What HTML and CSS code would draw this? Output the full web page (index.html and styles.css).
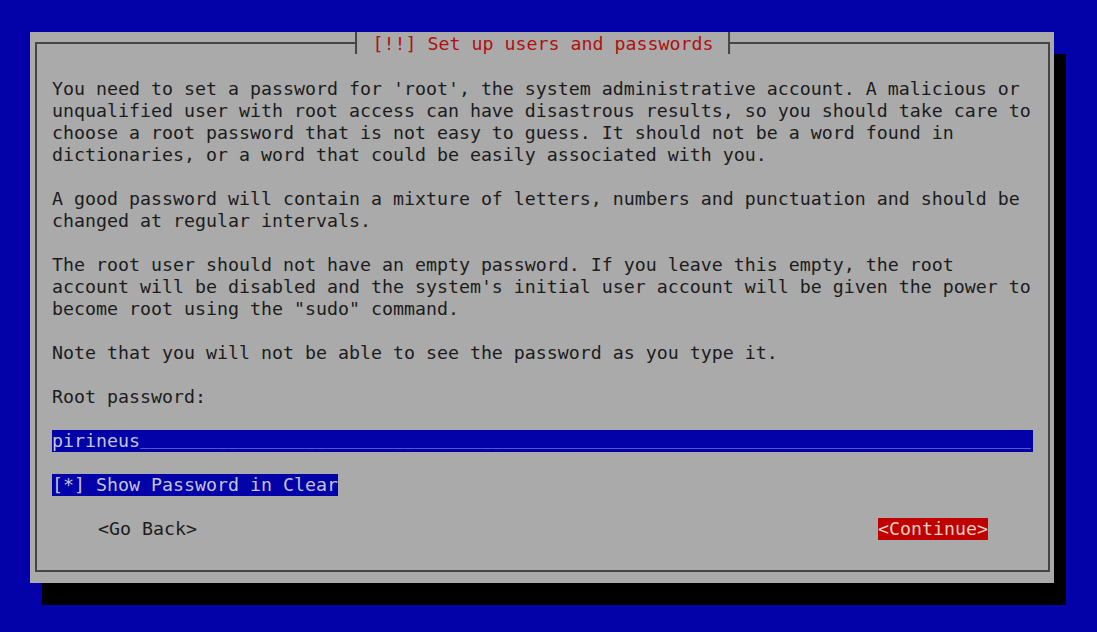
FILE: index.html
```html
<!DOCTYPE html>
<html lang="en">
<head>
    <meta charset="UTF-8">
    <meta name="viewport" content="width=device-width, initial-scale=1.0">
    <title>Set up users and passwords</title>
    <link rel="stylesheet" href="styles.css">
</head>
<body>

<div class="dialog">
    <div class="frame">
        <div class="title">[!!] Set up users and passwords</div>

        <p>You need to set a password for 'root', the system administrative account. A malicious or<br>unqualified user with root access can have disastrous results, so you should take care to<br>choose a root password that is not easy to guess. It should not be a word found in<br>dictionaries, or a word that could be easily associated with you.</p>

        <p>A good password will contain a mixture of letters, numbers and punctuation and should be<br>changed at regular intervals.</p>

        <p>The root user should not have an empty password. If you leave this empty, the root<br>account will be disabled and the system's initial user account will be given the power to<br>become root using the "sudo" command.</p>

        <p>Note that you will not be able to see the password as you type it.</p>

        <p>Root password:</p>

        <div class="entry">pirineus<span class="fill">_________________________________________________________________________________</span></div>

        <div class="check-row"><span class="check">[*] Show Password in Clear</span></div>

        <div class="buttons">
            <span class="button">&lt;Go Back&gt;</span>
            <span class="button active">&lt;Continue&gt;</span>
        </div>
    </div>
</div>

</body>
</html>
```

FILE: styles.css
```css
body {
    margin: 0;
    padding: 32px 0 0 30px;
    background-color: #0202a8;
    font-family: "DejaVu Sans Mono", "Liberation Mono", monospace;
    font-size: 18.27px;
    line-height: 22px;
    color: #1c1c1c;
    height: 100vh;
    box-sizing: border-box;
    overflow: hidden;
}

.dialog {
    width: 1024px;
    height: 551px;
    box-sizing: border-box;
    padding: 10px 4px 11px 5px;
    background-color: #aaaaaa;
    box-shadow: 12px 22px 0 #000;
}

.frame {
    position: relative;
    height: 100%;
    box-sizing: border-box;
    border: 2px solid #454545;
    padding: 34px 0 0 15px;
}

.title {
    position: absolute;
    top: -12px;
    left: 50%;
    transform: translateX(-50%);
    height: 22px;
    box-sizing: border-box;
    padding: 2px 15px 0 16px;
    line-height: 20px;
    border-left: 2px solid #454545;
    border-right: 2px solid #454545;
    background-color: #aaaaaa;
    color: #b01010;
    white-space: pre;
}

p {
    margin: 0 0 22px 0;
    white-space: nowrap;
}

.entry {
    width: 981px;
    height: 22px;
    background-color: #0202a8;
    color: #c4c4d6;
    white-space: pre;
    margin-bottom: 22px;
}

.fill {
    position: relative;
    top: -2px;
    color: #9c9ce0;
}

.check-row {
    height: 22px;
    margin-bottom: 22px;
}

.check {
    display: inline-block;
    background-color: #0202a8;
    color: #c4c4d6;
    white-space: pre;
}

.buttons {
    width: 981px;
    box-sizing: border-box;
    display: flex;
    justify-content: space-between;
    padding: 0 45px 0 46px;
}

.button {
    white-space: pre;
}

.button.active {
    background-color: #c00000;
    color: #ecd0c4;
}
```
